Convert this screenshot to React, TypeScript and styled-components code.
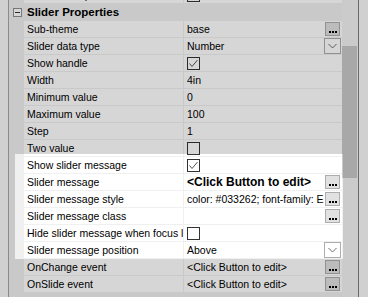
import * as React from 'react';
import styled, { createGlobalStyle } from 'styled-components';

const GlobalStyle = createGlobalStyle`
  html, body {
    margin: 0;
    padding: 0;
    background: #f5f5f5;
  }
  * {
    box-sizing: border-box;
  }
`;

const LINE = '#f0f0f0';
const CATEGORY = '#f0f0f0';

const Page = styled.div`
  position: relative;
  display: flex;
  width: 368px;
  height: 297px;
  overflow: hidden;
  font-family: 'Liberation Sans', Arial, sans-serif;
  font-size: 10.5px;
  color: #000;
  background: #f8f8f8;
`;

const LeftMargin = styled.div`
  width: 9px;
  flex: none;
  background: #f8f8f8;
  border-right: 1px solid #a6a6a6;
`;

const Grid = styled.div`
  width: 333px;
  flex: none;
  display: flex;
  flex-direction: column;
  margin-top: -13px;
  background: ${CATEGORY};
`;

const Row = styled.div`
  display: grid;
  grid-template-columns: 15px 160px 158px;
  height: 17px;
  flex: none;
`;

const Gutter = styled.div`
  background: ${CATEGORY};
  display: flex;
  align-items: center;
  justify-content: center;
  padding-left: 1px;
`;

const Label = styled.div`
  background: #fff;
  border-bottom: 1px solid ${LINE};
  border-right: 1px solid ${LINE};
  padding-left: 3px;
  display: flex;
  align-items: center;
  white-space: nowrap;
  overflow: hidden;
`;

const Value = styled.div`
  background: #fff;
  border-bottom: 1px solid ${LINE};
  padding-left: 3px;
  padding-right: 2px;
  display: flex;
  align-items: center;
  gap: 1px;
  overflow: hidden;
`;

const ValueText = styled.span<{ $strong?: boolean }>`
  flex: 1;
  min-width: 0;
  white-space: nowrap;
  overflow: hidden;
  font-weight: ${(p) => (p.$strong ? 700 : 400)};
  font-size: ${(p) => (p.$strong ? '12px' : '10.5px')};
`;

const CategoryRow = styled.div`
  display: grid;
  grid-template-columns: 15px 1fr;
  height: 17px;
  flex: none;
  background: ${CATEGORY};
  border-bottom: 1px solid ${LINE};
`;

const CategoryTitle = styled.div`
  padding-left: 3px;
  font-weight: 700;
  font-size: 11.5px;
  display: flex;
  align-items: center;
  white-space: nowrap;
`;

const Collapse = styled.span`
  width: 9px;
  height: 9px;
  border: 1px solid #8e8e8e;
  background: #fff;
  position: relative;
  &::after {
    content: '';
    position: absolute;
    left: 1px;
    right: 1px;
    top: 3px;
    height: 1px;
    background: #333;
  }
`;

const Box = styled.span`
  width: 13px;
  height: 13px;
  flex: none;
  border: 1px solid #333;
  background: #fff;
  display: flex;
  align-items: center;
  justify-content: center;
`;

const EllipsisButton = styled.span`
  width: 15px;
  height: 14px;
  flex: none;
  margin-top: -1px;
  background: #e1e1e1;
  border: 1px solid #adadad;
  display: flex;
  align-items: flex-end;
  justify-content: center;
  gap: 1px;
  padding-bottom: 2px;
  i {
    width: 2px;
    height: 2px;
    background: #000;
  }
`;

const DropButton = styled.span`
  width: 17px;
  height: 16px;
  flex: none;
  margin-right: -1px;
  background: #fff;
  border: 1px solid #adadad;
  display: flex;
  align-items: center;
  justify-content: center;
`;

const Scrollbar = styled.div`
  width: 16px;
  flex: none;
  background: #f2f2f2;
  display: flex;
  flex-direction: column;
`;

const Thumb = styled.div`
  margin-top: 46px;
  width: 15px;
  height: 132px;
  background: #c9c9c9;
`;

const RightEdge = styled.div`
  flex: 1;
  border-left: 1px solid #808080;
  background: #f8f8f8;
`;

const Spotlight = styled.div`
  position: absolute;
  left: 15px;
  top: 154px;
  width: 328px;
  height: 105px;
  box-shadow: 0 0 0 600px rgba(0, 0, 0, 0.16);
  pointer-events: none;
`;

const Check = ({ on }: { on: boolean }) => (
  <Box>
    {on && (
      <svg width="11" height="11" viewBox="0 0 11 11">
        <polyline points="1.5,5.5 4,8.5 9.5,2" fill="none" stroke="#555" strokeWidth="1" />
      </svg>
    )}
  </Box>
);

const Ellipsis = () => (
  <EllipsisButton>
    <i />
    <i />
    <i />
  </EllipsisButton>
);

const Drop = () => (
  <DropButton>
    <svg width="9" height="6" viewBox="0 0 9 6">
      <polyline points="0.5,1 4.5,5 8.5,1" fill="none" stroke="#6d6d6d" strokeWidth="1" />
    </svg>
  </DropButton>
);

type Prop = {
  label: string;
  text?: string;
  strong?: boolean;
  check?: boolean;
  editor?: 'ellipsis' | 'drop';
};

const props: Prop[] = [
  { label: 'Sub-theme', text: 'base', editor: 'ellipsis' },
  { label: 'Slider data type', text: 'Number', editor: 'drop' },
  { label: 'Show handle', check: true },
  { label: 'Width', text: '4in' },
  { label: 'Minimum value', text: '0' },
  { label: 'Maximum value', text: '100' },
  { label: 'Step', text: '1' },
  { label: 'Two value', check: false },
  { label: 'Show slider message', check: true },
  { label: 'Slider message', text: '<Click Button to edit>', strong: true, editor: 'ellipsis' },
  { label: 'Slider message style', text: 'color: #033262; font-family: Eras ITC', editor: 'ellipsis' },
  { label: 'Slider message class', text: '', editor: 'ellipsis' },
  { label: 'Hide slider message when focus lost', check: false },
  { label: 'Slider message position', text: 'Above', editor: 'drop' },
  { label: 'OnChange event', text: '<Click Button to edit>', editor: 'ellipsis' },
  { label: 'OnSlide event', text: '<Click Button to edit>', editor: 'ellipsis' },
];

const PropertyRow = ({ p }: { p: Prop }) => (
  <Row>
    <Gutter />
    <Label>{p.label}</Label>
    <Value>
      {p.check !== undefined ? (
        <Check on={p.check} />
      ) : (
        <ValueText $strong={p.strong}>{p.text}</ValueText>
      )}
      {p.editor === 'ellipsis' && <Ellipsis />}
      {p.editor === 'drop' && <Drop />}
    </Value>
  </Row>
);

export default function App() {
  return (
    <Page>
      <GlobalStyle />
      <LeftMargin />
      <Grid>
        <PropertyRow p={{ label: 'Enable tooltip', check: false }} />
        <CategoryRow>
          <Gutter>
            <Collapse />
          </Gutter>
          <CategoryTitle>Slider Properties</CategoryTitle>
        </CategoryRow>
        {props.map((p) => (
          <PropertyRow key={p.label} p={p} />
        ))}
        <CategoryRow>
          <Gutter>
            <Collapse />
          </Gutter>
          <CategoryTitle>Field Validation</CategoryTitle>
        </CategoryRow>
      </Grid>
      <Scrollbar>
        <Thumb />
      </Scrollbar>
      <RightEdge />
      <Spotlight />
    </Page>
  );
}
